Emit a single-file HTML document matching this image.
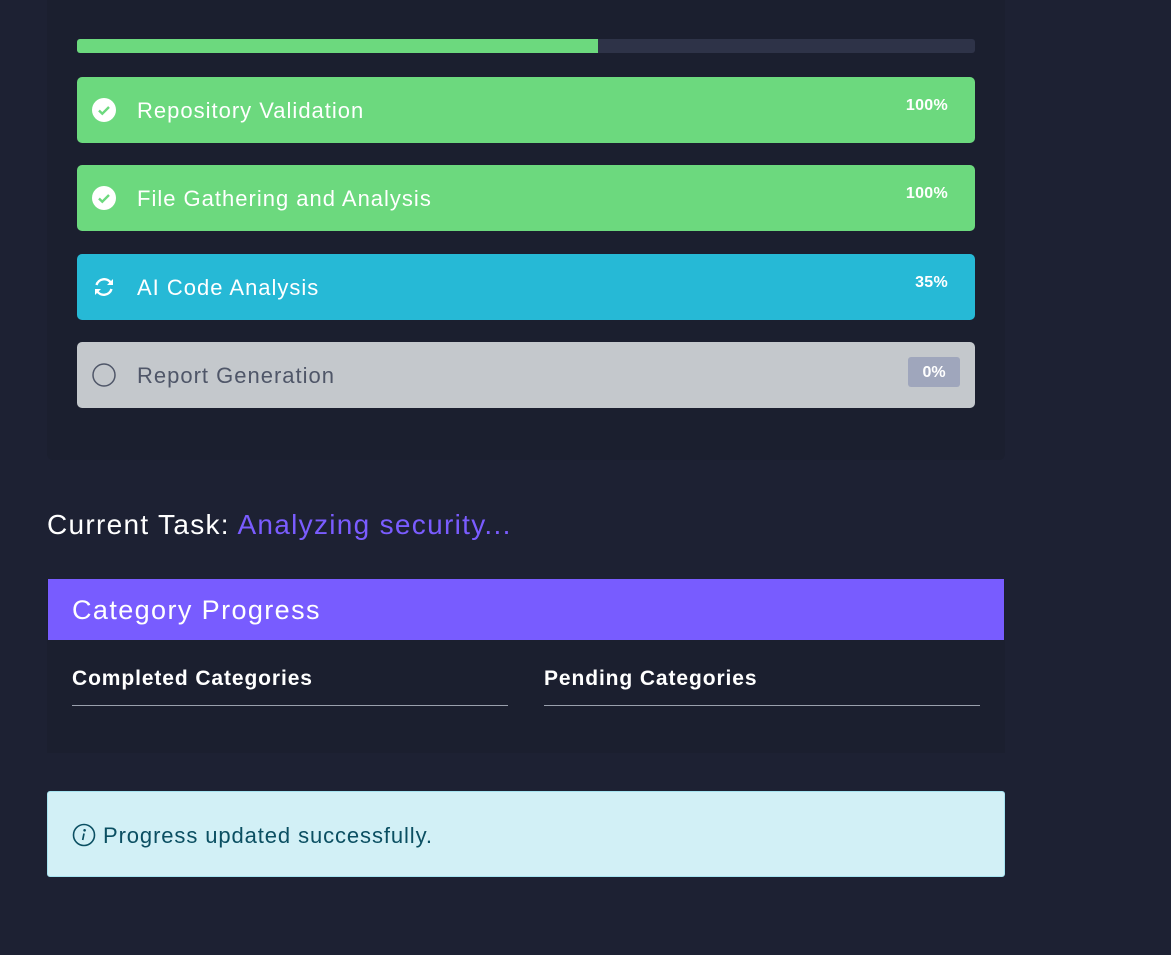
<!DOCTYPE html>
<html><head><style>
body{margin:0;background:#1d2133;font-family:"Liberation Sans",sans-serif;width:1171px;height:955px;overflow:hidden;position:relative}
.abs{position:absolute}
.panel{left:47px;top:-10px;width:958px;height:470px;background:#1b1f2f;border-radius:6px}
.track{left:77px;top:39px;width:898px;height:14px;background:#2e3348;border-radius:3px;overflow:hidden}
.track div{width:521px;height:14px;background:#6cd97e}
.step{left:77px;width:898px;height:66px;border-radius:5px;color:#fff;font-size:22px}
.step .lbl{position:absolute;left:60px;top:21px;letter-spacing:1px}
.step .pct{position:absolute;right:27px;top:20px;font-size:16px;font-weight:bold;letter-spacing:0.3px}
.step svg{position:absolute;left:15px;top:21px}
</style></head><body>
<div class="abs panel"></div>
<div class="abs track"><div></div></div>
<div class="abs step" style="top:77px;background:#6cd97e"><svg width="24" height="24" viewBox="0 0 24 24"><circle cx="12" cy="12" r="12" fill="#fff"/><path d="M7 12.5l3.3 3.2L17 9" stroke="#6cd97e" stroke-width="2.4" fill="none"/></svg><span class="lbl">Repository Validation</span><span class="pct">100%</span></div>
<div class="abs step" style="top:165px;background:#6cd97e"><svg width="24" height="24" viewBox="0 0 24 24"><circle cx="12" cy="12" r="12" fill="#fff"/><path d="M7 12.5l3.3 3.2L17 9" stroke="#6cd97e" stroke-width="2.4" fill="none"/></svg><span class="lbl">File Gathering and Analysis</span><span class="pct">100%</span></div>
<div class="abs step" style="top:254px;background:#26b9d6"><svg width="24" height="24" viewBox="0 0 24 24"><path d="M4.5 10A8 8 0 0 1 19 8" stroke="#fff" stroke-width="2.4" fill="none"/><path d="M21 4v6h-6z" fill="#fff"/><path d="M19.5 14A8 8 0 0 1 5 16" stroke="#fff" stroke-width="2.4" fill="none"/><path d="M3 20v-6h6z" fill="#fff"/></svg><span class="lbl">AI Code Analysis</span><span class="pct">35%</span></div>
<div class="abs step" style="top:342px;background:#c4c8cc;color:#4f5668"><svg width="26" height="26" viewBox="0 0 26 26"><circle cx="12" cy="12" r="11" stroke="#4f5668" stroke-width="1.5" fill="none"/></svg><span class="lbl">Report Generation</span><span class="abs" style="right:15px;top:15px;width:52px;height:30px;background:#9fa6bc;border-radius:3px;color:#fff;font-size:16px;font-weight:bold;text-align:center;line-height:32px">0%</span></div>
<div class="abs" style="left:47px;top:509px;font-size:28px;color:#fff;letter-spacing:1.3px">Current Task: <span style="color:#7a5cff">Analyzing security...</span></div>
<div class="abs" style="left:47px;top:579px;width:958px;height:174px;background:#1b1f2f"></div>
<div class="abs" style="left:48px;top:579px;width:956px;height:61px;background:#785cff;color:#fff;font-size:27px;line-height:63px;text-indent:24px;letter-spacing:1.4px">Category Progress</div>
<div class="abs" style="left:72px;top:667px;width:436px;height:38px;border-bottom:1px solid #9aa0ad;color:#fff;font-size:21px;font-weight:bold;letter-spacing:0.9px">Completed Categories</div>
<div class="abs" style="left:544px;top:667px;width:436px;height:38px;border-bottom:1px solid #9aa0ad;color:#fff;font-size:21px;font-weight:bold;letter-spacing:0.9px">Pending Categories</div>
<div class="abs" style="left:47px;top:791px;width:956px;height:84px;background:#d2f0f6;border:1px solid #a6e4f1;border-radius:3px;color:#0b4f62;font-size:22px">
<svg class="abs" style="left:24px;top:31px" width="24" height="24" viewBox="0 0 24 24"><circle cx="12" cy="12" r="10.5" stroke="#0b4f62" stroke-width="1.6" fill="none"/><circle cx="12.6" cy="7.3" r="1.3" fill="#0b4f62"/><path d="M12 10.5l-1.3 6.5" stroke="#0b4f62" stroke-width="1.7"/></svg>
<span class="abs" style="left:55px;top:31px;letter-spacing:0.9px">Progress updated successfully.</span></div>
</body></html>
